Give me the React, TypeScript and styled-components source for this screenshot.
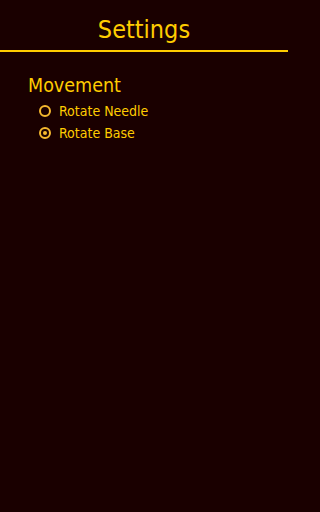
import React, { useState } from 'react';
import styled, { createGlobalStyle } from 'styled-components';

const GlobalStyle = createGlobalStyle`
  html, body {
    margin: 0;
    padding: 0;
    background: #1a0000;
  }
`;

const Page = styled.div`
  width: 100%;
  max-width: 288px;
  min-height: 100vh;
  background: #1a0000;
  color: #ffcc00;
  font-family: 'DejaVu Sans Condensed', 'DejaVu Sans', sans-serif;
`;

const Header = styled.header`
  height: 50px;
  border-bottom: 2px solid #ffcc00;
  display: flex;
  align-items: center;
  justify-content: center;
`;

const Title = styled.h1`
  margin: 0;
  font-size: 25px;
  font-weight: normal;
  line-height: 1;
  padding-top: 9px;
`;

const Section = styled.section`
  padding: 22px 0 0 28px;
`;

const SectionTitle = styled.h2`
  margin: 0 0 2px;
  font-size: 19.5px;
  font-weight: normal;
  line-height: 24px;
`;

const OptionList = styled.div`
  display: flex;
  flex-direction: column;
  padding-left: 11px;
`;

const Option = styled.label`
  display: flex;
  align-items: center;
  gap: 8px;
  height: 22px;
  font-size: 14px;
  cursor: pointer;
`;

const Radio = styled.span<{ $checked: boolean }>`
  width: 12px;
  height: 12px;
  box-sizing: border-box;
  border: 2px solid #f5b82e;
  border-radius: 50%;
  display: flex;
  align-items: center;
  justify-content: center;

  &::after {
    content: '';
    width: 4px;
    height: 4px;
    border-radius: 50%;
    background: #f5b82e;
    display: ${({ $checked }) => ($checked ? 'block' : 'none')};
  }
`;

const options = ['Rotate Needle', 'Rotate Base'];

export default function App() {
  const [selected, setSelected] = useState('Rotate Base');

  return (
    <>
      <GlobalStyle />
      <Page>
        <Header>
          <Title>Settings</Title>
        </Header>
        <Section>
          <SectionTitle>Movement</SectionTitle>
          <OptionList>
            {options.map((opt) => (
              <Option key={opt} onClick={() => setSelected(opt)}>
                <Radio $checked={selected === opt} />
                {opt}
              </Option>
            ))}
          </OptionList>
        </Section>
      </Page>
    </>
  );
}
